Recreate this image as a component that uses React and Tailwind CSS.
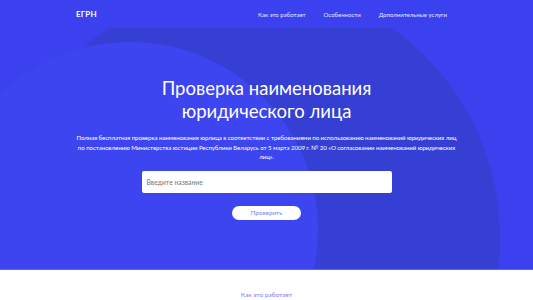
import React from "react";

export default function App() {
    return (
        <div className="w-[533px] h-[300px] overflow-hidden bg-white font-['Lato','Open_Sans',sans-serif]">
            <header className="h-[28px] bg-[#3b41ee] flex items-center justify-between pl-[76px] pr-[86px]">
                <span className="text-white font-bold text-[8px] tracking-[0.2px]">ЕГРН</span>
                <nav className="flex items-center gap-[18px] text-[6px] text-[#e6e8ff]">
                    <a>Как это работает</a>
                    <a>Особенности</a>
                    <a>Дополнительные услуги</a>
                </nav>
            </header>

            <section className="relative h-[242px] overflow-hidden bg-[#3b41ee] border-b border-[#5c62f3]">
                <div className="absolute left-[0px] top-[-45px] w-[500px] h-[510px] rounded-[50%] bg-[#363fd3]" />
                <div className="absolute left-[-58px] top-[14px] w-[376px] h-[376px] rounded-full bg-[#3d45f0]" />

                <div className="relative flex flex-col items-center pt-[49px]">
                    <h1 className="text-white text-[18.5px] leading-[23px] text-center font-normal">
                        Проверка наименования<br />юридического лица
                    </h1>
                    <p className="mt-[10px] w-[384px] text-center text-white text-[6.2px] leading-[9.5px] tracking-[-0.1px]">
                        Полная бесплатная проверка наименования юрлица в соответствии с требованиями по использованию наименований юридических лиц по постановлению Министерства юстиции Республики Беларусь от 5 марта 2009 г. № 20 «О согласовании наименований юридических лиц».
                    </p>
                    <input
                        className="mt-[9px] w-[250px] h-[22px] bg-white rounded-[2px] px-[5px] text-[6.8px] text-gray-700 placeholder:text-[#777] outline-none"
                        placeholder="Введите название"
                    />
                    <button className="mt-[13px] w-[69px] h-[14px] rounded-full bg-white text-[6.3px] text-[#7b7ff2]">
                        Проверить
                    </button>
                </div>
            </section>

            <div className="flex justify-center pt-[20px]">
                <span className="text-[6.5px] text-[#7b7ff2]">Как это работает</span>
            </div>
        </div>
    );
}
